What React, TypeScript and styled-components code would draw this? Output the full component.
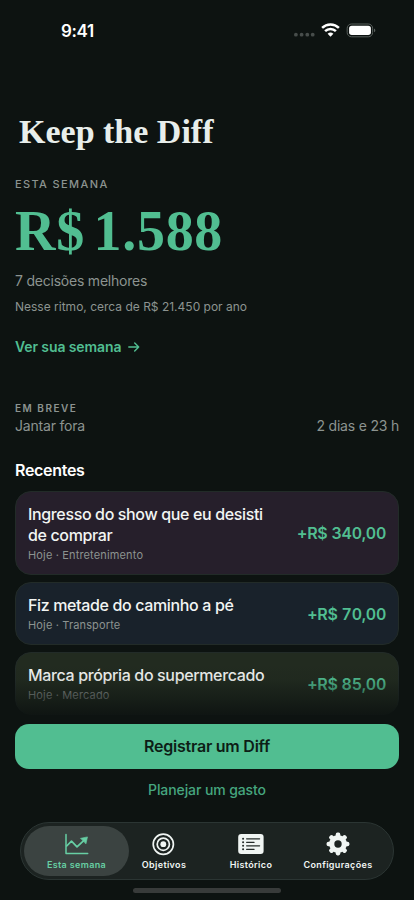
import React from "react";
import styled, { createGlobalStyle } from "styled-components";

const GlobalStyle = createGlobalStyle`
  * { box-sizing: border-box; }
  body { margin: 0; background: #0d1311; }
`;

const Screen = styled.div`
  width: 414px;
  height: 900px;
  overflow: hidden;
  display: flex;
  flex-direction: column;
  background: #0d1311;
  color: #f2f5f3;
  font-family: Inter, "Liberation Sans", sans-serif;
`;

const StatusBar = styled.header`
  height: 60px;
  padding: 0 38px 0 61px;
  display: flex;
  align-items: center;
  justify-content: space-between;
`;

const Clock = styled.span`
  font-size: 17px;
  line-height: 20px;
  font-weight: 600;
  letter-spacing: -0.35px;
  margin-top: 2px;
  color: #fff;
`;

const StatusIcons = styled.div`
  display: flex;
  align-items: center;
`;

const Title = styled.h1`
  margin: 52px 0 0 19px;
  font: 700 34px/40px "Liberation Serif", serif;
  color: #e8eeeb;
`;

const Summary = styled.section`
  padding: 25px 15px 0;
  display: flex;
  flex-direction: column;
  align-items: flex-start;
`;

const Label = styled.div<{ $size: number; $spacing: number; $weight: number }>`
  font-size: ${(p) => p.$size}px;
  line-height: 14px;
  font-weight: ${(p) => p.$weight};
  letter-spacing: ${(p) => p.$spacing}px;
  color: #8c9390;
`;

const Total = styled.div`
  margin-top: 8px;
  font: 700 56px/64px "Liberation Serif", serif;
  letter-spacing: 0.7px;
  word-spacing: -6px;
  color: #51be91;
`;

const Detail = styled.div<{ $size: number; $top: number; $spacing: number }>`
  margin-top: ${(p) => p.$top}px;
  font-size: ${(p) => p.$size}px;
  line-height: 18px;
  letter-spacing: ${(p) => p.$spacing}px;
  color: #8c9390;
`;

const WeekLink = styled.a`
  margin-top: 22px;
  display: flex;
  align-items: center;
  gap: 7px;
  font-size: 14px;
  line-height: 18px;
  font-weight: 600;
  letter-spacing: -0.1px;
  color: #51be91;
`;

const Upcoming = styled.section`
  padding: 45px 15px 0;
`;

const UpcomingRow = styled.div`
  display: flex;
  justify-content: space-between;
  margin-top: 2px;
  font-size: 14px;
  line-height: 18px;
  letter-spacing: -0.2px;
  color: #8c9390;
`;

const Recent = styled.section`
  position: relative;
  height: 288.5px;
  padding: 25px 15px 0;
`;

const SectionTitle = styled.h2`
  margin: 0 0 11px;
  font-size: 16px;
  line-height: 20px;
  font-weight: 600;
  letter-spacing: -0.3px;
  color: #fff;
`;

const CardList = styled.div`
  display: flex;
  flex-direction: column;
  gap: 7px;
`;

const Card = styled.article<{ $bg: string; $height: number }>`
  height: ${(p) => p.$height}px;
  padding: 0 12px;
  display: flex;
  align-items: center;
  justify-content: space-between;
  border: 1px solid #222b28;
  border-radius: 16px;
  background: ${(p) => p.$bg};
`;

const CardText = styled.div`
  padding-top: 1px;
`;

const CardTitle = styled.div`
  width: 245px;
  font-size: 16px;
  line-height: 21px;
  font-weight: 500;
  letter-spacing: -0.36px;
`;

const CardMeta = styled.div`
  margin-top: 1.5px;
  font-size: 11px;
  line-height: 16px;
  letter-spacing: 0.15px;
  color: #8c9390;
`;

const Amount = styled.div`
  font-size: 16px;
  line-height: 20px;
  font-weight: 600;
  font-variant-numeric: tabular-nums;
  white-space: nowrap;
  letter-spacing: -0.26px;
  color: #51be91;
`;

const Fade = styled.div`
  position: absolute;
  left: 0;
  right: 0;
  bottom: 0;
  height: 60px;
  background: linear-gradient(rgba(13, 19, 17, 0), rgba(13, 19, 17, 0.08) 25%, rgba(13, 19, 17, 0.45) 52%, rgba(13, 19, 17, 0.87) 82%, #0d1311);
`;

const Actions = styled.div`
  display: flex;
  flex-direction: column;
  align-items: center;
  padding: 0 15px;
`;

const PrimaryButton = styled.button`
  width: 100%;
  height: 45.5px;
  border: 0;
  border-radius: 14px;
  background: #51be91;
  color: #0d1d16;
  font: 600 16px/20px Inter, sans-serif;
  letter-spacing: -0.24px;
`;

const SecondaryButton = styled.button`
  margin-top: 11px;
  padding: 0;
  border: 0;
  background: none;
  color: #46a67f;
  font: 500 14px/20px Inter, sans-serif;
  letter-spacing: -0.1px;
`;

const TabBar = styled.nav`
  margin: 22px 20px 0;
  height: 58px;
  padding: 3px;
  display: flex;
  border: 1px solid #2b3533;
  border-radius: 29px;
  background: #1c2321;
`;

const Tab = styled.button<{ $active?: boolean; $width: number }>`
  width: ${(p) => p.$width}px;
  flex: none;
  border: 0;
  border-radius: 25px;
  padding: 6px 0 0;
  display: flex;
  flex-direction: column;
  align-items: center;
  background: ${(p) => (p.$active ? "#3b4341" : "transparent")};
  color: ${(p) => (p.$active ? "#67cfa4" : "#f0f5f3")};
  font: 600 9px/12px Inter, sans-serif;
  letter-spacing: 0.35px;
  white-space: nowrap;

  svg {
    display: block;
    margin-bottom: 3px;
  }
`;

const HomeIndicator = styled.div`
  width: 148px;
  height: 5px;
  margin: 8px auto 0;
  border-radius: 3px;
  background: #383b3a;
`;

const Signal = () => (
  <svg width="82" height="20" viewBox="0 0 82 20" fill="none">
    <g fill="#474d4b">
      <circle cx="1.9" cy="14.7" r="1.9" />
      <circle cx="7.6" cy="14.7" r="1.9" />
      <circle cx="13.3" cy="14.7" r="1.9" />
      <circle cx="18.7" cy="14.7" r="1.9" />
    </g>
    <g stroke="#fff" strokeWidth="2.5">
      <path d="M28.1 7.9a12 12 0 0 1 16.8 0" />
      <path d="M31.1 11.2a7.7 7.7 0 0 1 10.8 0" />
    </g>
    <path d="M33.6 13.7a4.3 4.3 0 0 1 5.8 0L36.5 16.8Z" fill="#fff" />
    <rect x="53.2" y="4" width="25.4" height="12.8" rx="4.2" stroke="#59605d" />
    <rect x="55.1" y="5.8" width="21.8" height="9.2" rx="2.7" fill="#fff" />
    <path d="M80 8.5c1.8.5 1.8 3.3 0 3.8Z" fill="#59605d" />
  </svg>
);

const Arrow = () => (
  <svg width="12" height="12" viewBox="0 0 12 12" fill="none" stroke="currentColor" strokeWidth="1.4" strokeLinecap="round" strokeLinejoin="round">
    <path d="M.8 6h9.9M6.7 2l4 4-4 4" />
  </svg>
);

const ChartIcon = () => (
  <svg width="26" height="24" viewBox="0 0 26 24" fill="none" stroke="currentColor" strokeWidth="1.5" strokeLinecap="round" strokeLinejoin="round">
    <path d="M2 2.5v19h21.7" />
    <path d="M2.7 14 7.5 9.2l5.5 5.7 6.7-6.2" strokeWidth="1.7" />
    <path d="m16.7 6.3 6.8-1.4-1.5 6.7Z" fill="currentColor" strokeWidth=".6" />
  </svg>
);

const TargetIcon = () => (
  <svg width="24" height="24" viewBox="0 0 24 24" fill="none" stroke="currentColor" strokeWidth="1.7">
    <circle cx="11.3" cy="12.2" r="10.1" />
    <circle cx="11.3" cy="12.2" r="6.1" />
    <circle cx="11.3" cy="12.2" r="2.9" fill="currentColor" stroke="none" />
  </svg>
);

const ListIcon = () => (
  <svg width="26" height="24" viewBox="0 0 26 24">
    <rect x=".2" y="2" width="25.4" height="20" rx="3" fill="currentColor" />
    <g stroke="#252c2a" strokeWidth="1.2" strokeLinecap="round">
      <path d="M8.6 6.8h13M8.6 10.3h7.5M8.6 13.8h13M8.6 17.3h7.5" />
    </g>
    <g fill="#252c2a">
      <circle cx="5.1" cy="6.8" r="1.05" />
      <circle cx="5.1" cy="10.3" r="1.05" />
      <circle cx="5.1" cy="13.8" r="1.05" />
      <circle cx="5.1" cy="17.3" r="1.05" />
    </g>
  </svg>
);

const GearIcon = () => (
  <svg width="24" height="24" viewBox="0 0 24 24">
    <g fill="currentColor">
      {[0, 45, 90, 135].map((angle) => (
        <rect key={angle} x="9.7" y=".6" width="4.6" height="22.8" rx="1.8" transform={`rotate(${angle} 12 12)`} />
      ))}
      <circle cx="12" cy="12" r="8.9" />
    </g>
    <circle cx="12" cy="12" r="3.7" fill="#1c2321" />
  </svg>
);

const entries = [
  { title: "Ingresso do show que eu desisti de comprar", meta: "Hoje · Entretenimento", amount: "+R$ 340,00", bg: "#261f2b", height: 84 },
  { title: "Fiz metade do caminho a pé", meta: "Hoje · Transporte", amount: "+R$ 70,00", bg: "#19222b", height: 63 },
  { title: "Marca própria do supermercado", meta: "Hoje · Mercado", amount: "+R$ 85,00", bg: "#222b20", height: 63 },
];

export default function App() {
  return (
    <Screen>
      <GlobalStyle />
      <StatusBar>
        <Clock>9:41</Clock>
        <StatusIcons>
          <Signal />
        </StatusIcons>
      </StatusBar>
      <Title>Keep the Diff</Title>
      <Summary>
        <Label $size={11} $spacing={1.38} $weight={500}>ESTA SEMANA</Label>
        <Total>R$ 1.588</Total>
        <Detail $size={14} $top={9} $spacing={-0.22}>7 decisões melhores</Detail>
        <Detail $size={12} $top={8} $spacing={0}>Nesse ritmo, cerca de R$ 21.450 por ano</Detail>
        <WeekLink>
          <span>Ver sua semana</span>
          <Arrow />
        </WeekLink>
      </Summary>
      <Upcoming>
        <Label $size={10} $spacing={1.5} $weight={600}>EM BREVE</Label>
        <UpcomingRow>
          <span>Jantar fora</span>
          <span>2 dias e 23 h</span>
        </UpcomingRow>
      </Upcoming>
      <Recent>
        <SectionTitle>Recentes</SectionTitle>
        <CardList>
          {entries.map((e) => (
            <Card key={e.title} $bg={e.bg} $height={e.height}>
              <CardText>
                <CardTitle>{e.title}</CardTitle>
                <CardMeta>{e.meta}</CardMeta>
              </CardText>
              <Amount>{e.amount}</Amount>
            </Card>
          ))}
        </CardList>
        <Fade />
      </Recent>
      <Actions>
        <PrimaryButton>Registrar um Diff</PrimaryButton>
        <SecondaryButton>Planejar um gasto</SecondaryButton>
      </Actions>
      <TabBar>
        <Tab $active $width={105}><ChartIcon />Esta semana</Tab>
        <Tab $width={70}><TargetIcon />Objetivos</Tab>
        <Tab $width={104}><ListIcon />Histórico</Tab>
        <Tab $width={70}><GearIcon />Configurações</Tab>
      </TabBar>
      <HomeIndicator />
    </Screen>
  );
}
